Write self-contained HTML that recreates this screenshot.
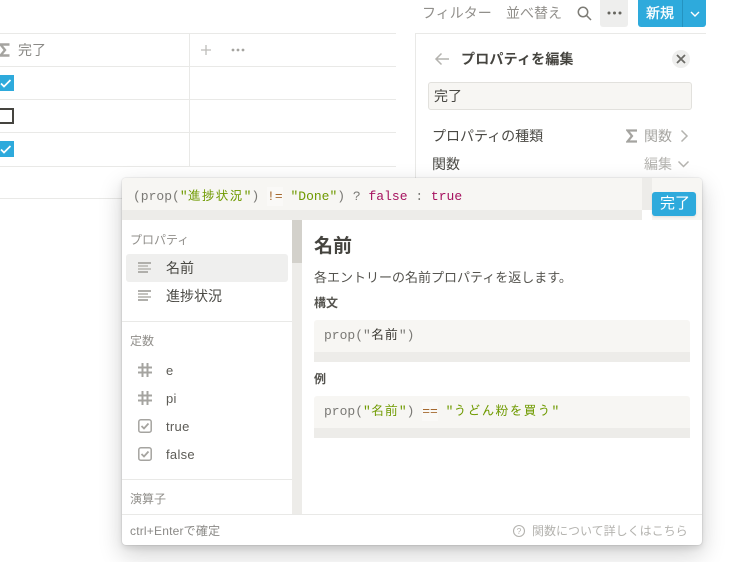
<!DOCTYPE html>
<html lang="ja"><head><meta charset="utf-8"><style>
html,body{margin:0;padding:0;background:#fff}
#p{position:relative;width:740px;height:562px;overflow:hidden;background:#fff;font-family:"Liberation Sans","Noto Sans CJK JP",sans-serif;font-size:14px;color:#4a4944}
#p div,#p svg{position:absolute}
.t{white-space:nowrap;line-height:20px}
.m{font-family:"Liberation Mono","IPAGothic","Noto Sans CJK JP",monospace;font-size:13px;white-space:nowrap;line-height:20px;color:#7a7975}
.j{letter-spacing:1px}
.g{color:#6f9a00}.r{color:#a6125f}.o{color:#a5692f;background:#faf9f7;padding:2px 0}
.h{background:#e9e9e7}
.l{color:#5c5b56;font-size:13px;letter-spacing:.3px}
</style></head><body><div id="p">
<div class="t" style="left:422px;top:3px;color:#918f8b">フィルター</div>
<div class="t" style="left:506px;top:3px;color:#918f8b">並べ替え</div>
<svg style="left:577px;top:6px" width="15" height="15" viewBox="0 0 15 15" fill="none" stroke="#7d7c76" stroke-width="1.5"><circle cx="6" cy="6" r="4.7"/><path d="M9.500 9.500L14 14"/></svg>
<div style="left:600px;top:0;width:28px;height:27px;background:#eeeeed;border-radius:0 0 3px 3px"></div>
<svg style="left:607px;top:10px" width="15" height="6"><circle cx="2" cy="3" r="1.500" fill="#66655f"/><circle cx="7.500" cy="3" r="1.500" fill="#66655f"/><circle cx="13" cy="3" r="1.500" fill="#66655f"/></svg>
<div style="left:638px;top:0;width:68px;height:27px;background:#2eaadc;border-radius:0 0 3px 3px"></div>
<div style="left:682px;top:0;width:1px;height:27px;background:#2493c0"></div>
<div class="t" style="left:646px;top:3px;color:#fff;-webkit-text-stroke:.3px #fff">新規</div>
<svg style="left:689px;top:10px" width="12" height="8" fill="none" stroke="#fff" stroke-width="1.400"><path d="M2 2l4 4 4-4"/></svg>

<div class="h" style="left:0;top:33px;width:396px;height:1px"></div>
<div class="h" style="left:0;top:66px;width:396px;height:1px"></div>
<div class="h" style="left:0;top:99px;width:396px;height:1px"></div>
<div class="h" style="left:0;top:132px;width:396px;height:1px"></div>
<div class="h" style="left:0;top:166px;width:396px;height:1px"></div>
<div class="h" style="left:0;top:198px;width:396px;height:1px"></div>
<div class="h" style="left:189px;top:33px;width:1px;height:133px"></div>
<svg style="left:0;top:43px" width="10" height="14" fill="none" stroke="#a5a4a0" stroke-width="2.400"><path d="M9.500 1.500H.5L5 7 .5 12.500h9"/></svg>
<div class="t" style="left:18px;top:40px;color:#8a8986">完了</div>
<svg style="left:200px;top:44px" width="12" height="12" stroke="#bdbcb9" stroke-width="1.300"><path d="M6 1v10M1 6h10"/></svg>
<svg style="left:231px;top:47px" width="14" height="6" fill="#a5a4a0"><circle cx="2" cy="3" r="1.400"/><circle cx="7" cy="3" r="1.400"/><circle cx="12" cy="3" r="1.400"/></svg>
<div style="left:0;top:75px;width:14px;height:16px;background:#2eaadc"></div>
<svg style="left:0;top:75px" width="14" height="16" fill="none" stroke="#fff" stroke-width="1.700"><path d="M1 8.500l3 3 6.500-6.500"/></svg>
<div style="left:-2px;top:108px;width:12px;height:12px;border:2px solid #45443f"></div>
<div style="left:0;top:141px;width:14px;height:16px;background:#2eaadc"></div>
<svg style="left:0;top:141px" width="14" height="16" fill="none" stroke="#fff" stroke-width="1.700"><path d="M1 8.500l3 3 6.500-6.500"/></svg>

<div style="left:415px;top:33px;width:291px;height:1px;background:#e9e9e7"></div>
<div style="left:415px;top:33px;width:1px;height:150px;background:#e9e9e7"></div>
<svg style="left:434px;top:52px" width="16" height="14" fill="none" stroke="#b4b3af" stroke-width="1.500"><path d="M15 7H2M7.500 1.500L2 7l5.500 5.500"/></svg>
<div class="t" style="left:461px;top:49px;font-weight:700;color:#45443f;letter-spacing:.2px">プロパティを編集</div>
<div style="left:672px;top:50px;width:18px;height:18px;border-radius:50%;background:#eeeeed"></div>
<svg style="left:676px;top:54px" width="10" height="10" stroke="#6b6a66" stroke-width="1.800"><path d="M1 1l8 8M9 1l-8 8"/></svg>
<div style="left:428px;top:82px;width:262px;height:26px;background:#f7f6f3;border:1px solid #e2e1dd;border-radius:3px"></div>
<div class="t" style="left:434px;top:86px">完了</div>
<div class="t" style="left:432px;top:126px">プロパティの種類</div>
<svg style="left:626px;top:129px" width="12" height="14" fill="none" stroke="#a5a4a0" stroke-width="2.200"><path d="M11 1.500H1.500L6 7l-4.500 5.500H11"/></svg>
<div class="t" style="left:644px;top:126px;color:#a5a4a0">関数</div>
<svg style="left:680px;top:129px" width="9" height="14" fill="none" stroke="#b4b3af" stroke-width="1.500"><path d="M1.500 1.500L7 7l-5.500 5.500"/></svg>
<div class="t" style="left:432px;top:154px">関数</div>
<div class="t" style="left:644px;top:154px;color:#b4b3af">編集</div>
<svg style="left:677px;top:160px" width="13" height="9" fill="none" stroke="#b4b3af" stroke-width="1.500"><path d="M1.500 1.500l5 5 5-5"/></svg>

<div style="left:122px;top:178px;width:580px;height:367px;background:#fff;border-radius:4px;box-shadow:0 0 0 1px rgba(15,15,15,.05),0 3px 6px rgba(15,15,15,.1),0 9px 24px rgba(15,15,15,.2);overflow:hidden">
<div style="left:0;top:0;width:520px;height:32px;background:#f7f6f3"></div>
<div style="left:0;top:32px;width:530px;height:10px;background:#edece9"></div>
<div style="left:520px;top:0;width:10px;height:32px;background:#edece9"></div>
<div style="left:530px;top:0;width:50px;height:42px;background:#f7f6f3"></div>
<div style="left:520px;top:32px;width:10px;height:10px;background:#fff"></div>
<div style="left:170px;top:42px;width:10px;height:294px;background:#edece9"></div>
<div style="left:170px;top:42px;width:10px;height:43px;background:#d3d1cb"></div>
</div>
<div class="m" style="left:133px;top:187px">(prop(<span class="g">"<span class="j">進捗状況</span>"</span>) <span class="o">!=</span> <span class="g">"Done"</span>) ? <span class="r">false</span> : <span class="r">true</span></div>
<div style="left:652px;top:192px;width:44px;height:24px;background:#2eaadc;border-radius:3px;box-shadow:0 1px 2px rgba(15,15,15,.1)"></div>
<div class="t" style="left:660px;top:194px;color:#fff;font-size:15px">完了</div>

<div class="t" style="left:130px;top:230px;font-size:12px;color:#918f8b">プロパティ</div>
<div style="left:126px;top:254px;width:162px;height:28px;background:#efefee;border-radius:3px"></div>
<svg style="left:138px;top:262px" width="14" height="12" fill="#b0afab"><rect width="13" height="2"/><rect y="3" width="10" height="2" fill="#c4c3bf"/><rect y="6" width="13" height="2" fill="#c4c3bf"/><rect y="9" width="10" height="2"/></svg>
<div class="t" style="left:166px;top:258px">名前</div>
<svg style="left:138px;top:290px" width="14" height="12" fill="#b0afab"><rect width="13" height="2"/><rect y="3" width="10" height="2" fill="#c4c3bf"/><rect y="6" width="13" height="2" fill="#c4c3bf"/><rect y="9" width="10" height="2"/></svg>
<div class="t" style="left:166px;top:286px">進捗状況</div>
<div style="left:122px;top:321px;width:170px;height:1px;background:#e9e9e7"></div>
<div class="t" style="left:130px;top:331px;font-size:12px;color:#918f8b">定数</div>
<svg style="left:138px;top:363px" width="14" height="14" stroke="#a5a4a0" stroke-width="2"><path d="M4.500 0v14M9.500 0v14M0 4.500h14M0 9.500h14"/></svg>
<div class="t l" style="left:166px;top:361px">e</div>
<svg style="left:138px;top:391px" width="14" height="14" stroke="#a5a4a0" stroke-width="2"><path d="M4.500 0v14M9.500 0v14M0 4.500h14M0 9.500h14"/></svg>
<div class="t l" style="left:166px;top:389px">pi</div>
<svg style="left:138px;top:419px" width="14" height="14" fill="none"><rect x=".8" y=".8" width="12.400" height="12.400" rx="2" stroke="#a5a4a0" stroke-width="1.500"/><path d="M3.500 7l2.500 2.500 4.500-5" stroke="#a5a4a0" stroke-width="1.800"/></svg>
<div class="t l" style="left:166px;top:417px">true</div>
<svg style="left:138px;top:447px" width="14" height="14" fill="none"><rect x=".8" y=".8" width="12.400" height="12.400" rx="2" stroke="#a5a4a0" stroke-width="1.500"/><path d="M3.500 7l2.500 2.500 4.500-5" stroke="#a5a4a0" stroke-width="1.800"/></svg>
<div class="t l" style="left:166px;top:445px">false</div>
<div style="left:122px;top:479px;width:170px;height:1px;background:#e9e9e7"></div>
<div class="t" style="left:130px;top:489px;font-size:12px;color:#918f8b">演算子</div>

<div class="t" style="left:314px;top:236px;font-size:19px;line-height:22px;font-weight:700;color:#45443f">名前</div>
<div class="t" style="left:314px;top:268px;font-size:13px;color:#55544f">各エントリーの名前プロパティを返します。</div>
<div class="t" style="left:314px;top:293px;font-size:12px;font-weight:700;color:#55544f">構文</div>
<div style="left:314px;top:320px;width:376px;height:42px;background:#f7f6f3;border-radius:3px 3px 0 0"></div>
<div style="left:314px;top:352px;width:376px;height:10px;background:#edece9"></div>
<div class="m" style="left:324px;top:326px">prop("<span class="j" style="color:#37352f">名前</span>")</div>
<div class="t" style="left:314px;top:369px;font-size:12px;font-weight:700;color:#55544f">例</div>
<div style="left:314px;top:396px;width:376px;height:42px;background:#f7f6f3;border-radius:3px 3px 0 0"></div>
<div style="left:314px;top:428px;width:376px;height:10px;background:#edece9"></div>
<div class="m" style="left:324px;top:402px">prop(<span class="g">"<span class="j">名前</span>"</span>) <span class="o">==</span> <span class="g">"<span class="j">うどん粉を買う</span>"</span></div>

<div style="left:122px;top:514px;width:580px;height:1px;background:#e9e9e7"></div>
<div class="t" style="left:130px;top:521px;font-size:12px;color:#8a8986;letter-spacing:.2px">ctrl+Enterで確定</div>
<svg style="left:512px;top:524px" width="14" height="14" fill="none"><circle cx="7" cy="7" r="5.500" stroke="#b4b3af" stroke-width="1.100"/><text x="7" y="10" font-size="8.500" text-anchor="middle" fill="#b4b3af" font-family="Liberation Sans">?</text></svg>
<div class="t" style="left:532px;top:521px;font-size:12px;color:#b4b3af">関数について詳しくはこちら</div>
</div></body></html>
